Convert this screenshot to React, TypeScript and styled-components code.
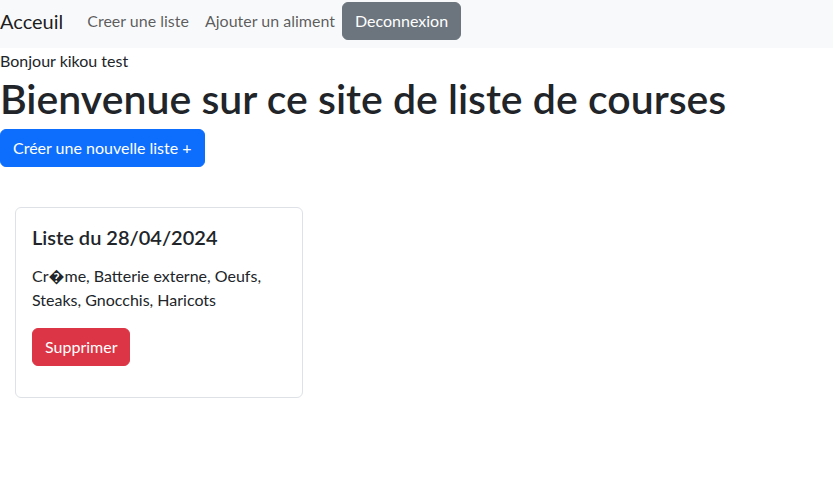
import React from "react";
import styled, { createGlobalStyle } from "styled-components";

const GlobalStyle = createGlobalStyle`
  * { box-sizing: border-box; }
  body {
    margin: 0;
    font-family: "Lato", "Open Sans", sans-serif;
    font-size: 16px;
    line-height: 1.5;
    color: #212529;
    background: #ffffff;
  }
`;

const Navbar = styled.nav`
  display: flex;
  align-items: center;
  height: 48px;
  padding: 2px 0 8px;
  background: #f8f9fa;
`;

const Brand = styled.a`
  font-size: 20px;
  line-height: 30px;
  color: rgba(0, 0, 0, 0.9);
  margin-right: 16px;
  text-decoration: none;
`;

const NavLink = styled.a`
  padding: 8px;
  color: rgba(0, 0, 0, 0.65);
  text-decoration: none;
`;

const Button = styled.button<{ $variant: "primary" | "secondary" | "danger" }>`
  font-family: inherit;
  font-size: 16px;
  line-height: 24px;
  padding: 6px 12px;
  border: 1px solid transparent;
  border-radius: 6px;
  color: #ffffff;
  cursor: pointer;
  background: ${(p) =>
    p.$variant === "primary" ? "#0d6efd" : p.$variant === "danger" ? "#dc3545" : "#6c757d"};
  border-color: ${(p) =>
    p.$variant === "primary" ? "#0d6efd" : p.$variant === "danger" ? "#dc3545" : "#6c757d"};
`;

const NavButton = styled(Button)`
  margin-left: -1px;
`;

const Greeting = styled.p`
  margin: 1px 0 0;
`;

const Title = styled.h1`
  margin: 2px 0 6px;
  font-size: 41px;
  font-weight: 600;
  line-height: 48px;
  white-space: nowrap;
`;

const CardArea = styled.div`
  display: flex;
  padding: 40px 15px;
`;

const Card = styled.div`
  width: 288px;
  border: 1px solid #dee2e6;
  border-radius: 6px;
  padding: 16px 16px 31px;
`;

const CardTitle = styled.h5`
  margin: 0 0 14px;
  font-size: 20px;
  font-weight: 600;
  line-height: 26px;
`;

const CardText = styled.p`
  margin: 0 0 16px;
  font-size: 16px;
  line-height: 24px;
`;

export default function App() {
  return (
    <>
      <GlobalStyle />
      <Navbar>
        <Brand href="#">Acceuil</Brand>
        <NavLink href="#">Creer une liste</NavLink>
        <NavLink href="#">Ajouter un aliment</NavLink>
        <NavButton $variant="secondary">Deconnexion</NavButton>
      </Navbar>
      <Greeting>Bonjour kikou test</Greeting>
      <Title>Bienvenue sur ce site de liste de courses</Title>
      <Button $variant="primary">Créer une nouvelle liste +</Button>
      <CardArea>
        <Card>
          <CardTitle>Liste du 28/04/2024</CardTitle>
          <CardText>Cr{"\uFFFD"}me, Batterie externe, Oeufs, Steaks, Gnocchis, Haricots</CardText>
          <Button $variant="danger">Supprimer</Button>
        </Card>
      </CardArea>
    </>
  );
}
